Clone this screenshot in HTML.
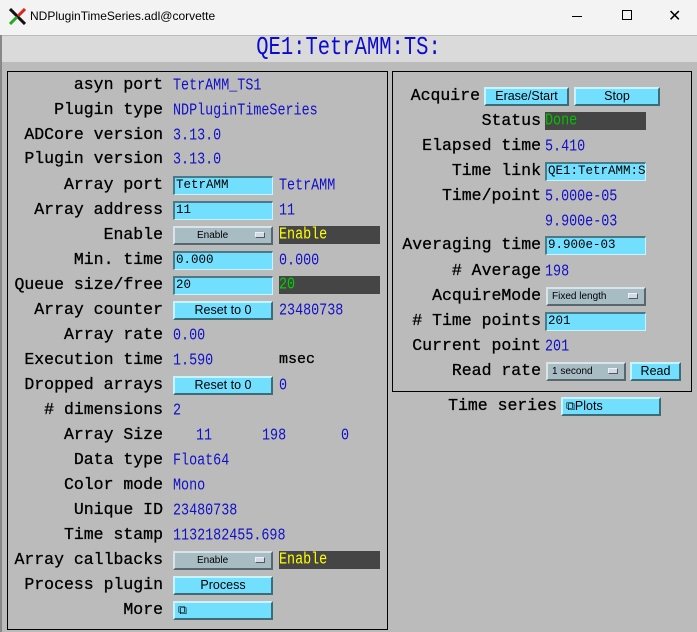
<!DOCTYPE html>
<html><head><meta charset="utf-8"><style>
*{margin:0;padding:0;box-sizing:border-box}
body{width:697px;height:632px;background:#bbbbbb;position:relative;overflow:hidden;font-family:"Liberation Mono",monospace}
#tb{position:absolute;left:0;top:0;width:697px;height:35px;background:#f3f3f3;font-family:"Liberation Sans",sans-serif;font-size:12px}
#hdr{position:absolute;left:0;top:36px;width:697px;height:26px;background:#dadada;color:#0a0ad0;font-size:20.5px;text-align:center;line-height:26px}
#hdr span{display:inline-block;transform:scaleY(1.25)}
.box{position:absolute;border:1px solid #000}
.l{position:absolute;font-size:16.5px;color:#000;text-align:right;line-height:20px;white-space:nowrap;-webkit-text-stroke:0.3px #000}
.v{position:absolute;font-size:13.4px;color:#1010c8;line-height:20px;white-space:nowrap;transform:translateY(2px) scaleY(1.25);transform-origin:left center}
.in{position:absolute;height:19px;background:#73dfff;border-top:2px solid #4a7a88;border-left:2px solid #4a7a88;border-bottom:1px solid #c8f4ff;border-right:1px solid #c8f4ff;font-size:12.5px;color:#000;line-height:15px;padding-left:1px;white-space:nowrap;overflow:hidden}
.bt{position:absolute;height:19px;background:#73dfff;border-top:2px solid #c8f4ff;border-left:2px solid #c8f4ff;border-bottom:2px solid #3c6c78;border-right:2px solid #3c6c78;font-family:"Liberation Sans",sans-serif;font-size:12.5px;color:#000;text-align:center;line-height:15px;white-space:nowrap}
.mn{position:absolute;height:19px;background:#a8bcc4;border-top:2px solid #d8e4e8;border-left:2px solid #d8e4e8;border-bottom:2px solid #56686e;border-right:2px solid #56686e;font-family:"Liberation Sans",sans-serif;font-size:10px;color:#000;line-height:15px;white-space:nowrap}
.mn i{position:absolute;right:6px;top:4px;width:10px;height:6px;background:#d0dce0;border:1px solid #eef;border-right-color:#556;border-bottom-color:#556}
.dk{position:absolute;height:18px;background:#454545;font-size:13.4px;line-height:18px;white-space:nowrap}
.dk span{display:inline-block;transform:translateY(1px) scaleY(1.25)}
</style></head><body>
<div id="tb">
<svg style="position:absolute;left:9px;top:8px" width="17" height="17" viewBox="0 0 17 17"><path d="M1 1 L16 16" stroke="#111" stroke-width="3"/><path d="M16 1 L9 8" stroke="#d22" stroke-width="3"/><path d="M8 9 L1 16" stroke="#2a2" stroke-width="3"/></svg>
<div style="position:absolute;left:30px;top:9px">NDPluginTimeSeries.adl@corvette</div>
<div style="position:absolute;left:572px;top:16px;width:10px;height:1px;background:#000"></div>
<div style="position:absolute;left:622px;top:10px;width:10px;height:10px;border:1px solid #000"></div>
<div style="position:absolute;left:668px;top:6px;font-size:16px">✕</div>
</div>
<div id="hdr"><span>QE1:TetrAMM:TS:</span></div>
<div style="position:absolute;left:0;top:35px;width:2px;height:597px;background:#888"></div>
<div class="box" style="left:7px;top:71px;width:381px;height:559px"></div>
<div class="box" style="left:392px;top:71px;width:300px;height:321px"></div>

<div class="l" style="right:534px;top:75px">asyn port</div>
<div class="l" style="right:534px;top:100px">Plugin type</div>
<div class="l" style="right:534px;top:125px">ADCore version</div>
<div class="l" style="right:534px;top:149px">Plugin version</div>
<div class="l" style="right:534px;top:175px">Array port</div>
<div class="l" style="right:534px;top:200px">Array address</div>
<div class="l" style="right:534px;top:225px">Enable</div>
<div class="l" style="right:534px;top:250px">Min. time</div>
<div class="l" style="right:534px;top:275px">Queue size/free</div>
<div class="l" style="right:534px;top:300px">Array counter</div>
<div class="l" style="right:534px;top:325px">Array rate</div>
<div class="l" style="right:534px;top:350px">Execution time</div>
<div class="l" style="right:534px;top:375px">Dropped arrays</div>
<div class="l" style="right:534px;top:400px"># dimensions</div>
<div class="l" style="right:534px;top:425px">Array Size</div>
<div class="l" style="right:534px;top:450px">Data type</div>
<div class="l" style="right:534px;top:475px">Color mode</div>
<div class="l" style="right:534px;top:500px">Unique ID</div>
<div class="l" style="right:534px;top:525px">Time stamp</div>
<div class="l" style="right:534px;top:550px">Array callbacks</div>
<div class="l" style="right:534px;top:575px">Process plugin</div>
<div class="l" style="right:534px;top:600px">More</div>

<div class="v" style="left:173px;top:75px">TetrAMM_TS1</div>
<div class="v" style="left:173px;top:100px">NDPluginTimeSeries</div>
<div class="v" style="left:173px;top:125px">3.13.0</div>
<div class="v" style="left:173px;top:149px">3.13.0</div>
<div class="in" style="left:173px;top:176px;width:100px">TetrAMM</div>
<div class="v" style="left:279px;top:175px">TetrAMM</div>
<div class="in" style="left:173px;top:201px;width:100px">11</div>
<div class="v" style="left:279px;top:200px">11</div>
<div class="mn" style="left:173px;top:226px;width:100px;padding-left:22px">Enable<i></i></div>
<div class="dk" style="left:279px;top:226px;width:101px;color:#ffff00"><span>Enable</span></div>
<div class="in" style="left:173px;top:251px;width:100px">0.000</div>
<div class="v" style="left:279px;top:250px">0.000</div>
<div class="in" style="left:173px;top:276px;width:100px">20</div>
<div class="dk" style="left:279px;top:276px;width:101px;color:#00d000"><span>20</span></div>
<div class="bt" style="left:173px;top:301px;width:100px">Reset to 0</div>
<div class="v" style="left:279px;top:300px">23480738</div>
<div class="v" style="left:173px;top:325px">0.00</div>
<div class="v" style="left:173px;top:350px">1.590</div>
<div class="l" style="left:279px;top:350px;font-size:15px">msec</div>
<div class="bt" style="left:173px;top:376px;width:100px">Reset to 0</div>
<div class="v" style="left:279px;top:375px">0</div>
<div class="v" style="left:173px;top:400px">2</div>
<div class="v" style="left:196px;top:425px">11</div>
<div class="v" style="left:262px;top:425px">198</div>
<div class="v" style="left:341px;top:425px">0</div>
<div class="v" style="left:173px;top:450px">Float64</div>
<div class="v" style="left:173px;top:475px">Mono</div>
<div class="v" style="left:173px;top:500px">23480738</div>
<div class="v" style="left:173px;top:525px">1132182455.698</div>
<div class="mn" style="left:173px;top:551px;width:100px;padding-left:22px">Enable<i></i></div>
<div class="dk" style="left:279px;top:551px;width:101px;color:#ffff00"><span>Enable</span></div>
<div class="bt" style="left:173px;top:576px;width:100px">Process</div>
<div class="bt" style="left:173px;top:601px;width:100px;text-align:left;padding-left:3px">⧉</div>

<div class="l" style="right:217px;top:86px">Acquire</div>
<div class="bt" style="left:484px;top:87px;width:85px">Erase/Start</div>
<div class="bt" style="left:574px;top:87px;width:86px">Stop</div>
<div class="l" style="right:156px;top:111px">Status</div>
<div class="dk" style="left:545px;top:112px;width:101px;color:#00c000"><span>Done</span></div>
<div class="l" style="right:156px;top:136px">Elapsed time</div>
<div class="v" style="left:545px;top:136px">5.410</div>
<div class="l" style="right:156px;top:161px">Time link</div>
<div class="in" style="left:545px;top:162px;width:101px">QE1:TetrAMM:Sa</div>
<div class="l" style="right:156px;top:186px">Time/point</div>
<div class="v" style="left:545px;top:186px">5.000e-05</div>
<div class="v" style="left:545px;top:211px">9.900e-03</div>
<div class="l" style="right:156px;top:235px">Averaging time</div>
<div class="in" style="left:545px;top:236px;width:101px">9.900e-03</div>
<div class="l" style="right:156px;top:261px"># Average</div>
<div class="v" style="left:545px;top:261px">198</div>
<div class="l" style="right:156px;top:286px">AcquireMode</div>
<div class="mn" style="left:546px;top:287px;width:100px;padding-left:4px">Fixed length<i></i></div>
<div class="l" style="right:156px;top:311px"># Time points</div>
<div class="in" style="left:545px;top:312px;width:101px">201</div>
<div class="l" style="right:156px;top:336px">Current point</div>
<div class="v" style="left:545px;top:336px">201</div>
<div class="l" style="right:156px;top:361px">Read rate</div>
<div class="mn" style="left:546px;top:362px;width:80px;padding-left:4px">1 second<i></i></div>
<div class="bt" style="left:630px;top:362px;width:51px">Read</div>
<div class="l" style="right:140px;top:396px">Time series</div>
<div class="bt" style="left:561px;top:397px;width:100px;text-align:left;padding-left:3px">⧉Plots</div>
</body></html>
